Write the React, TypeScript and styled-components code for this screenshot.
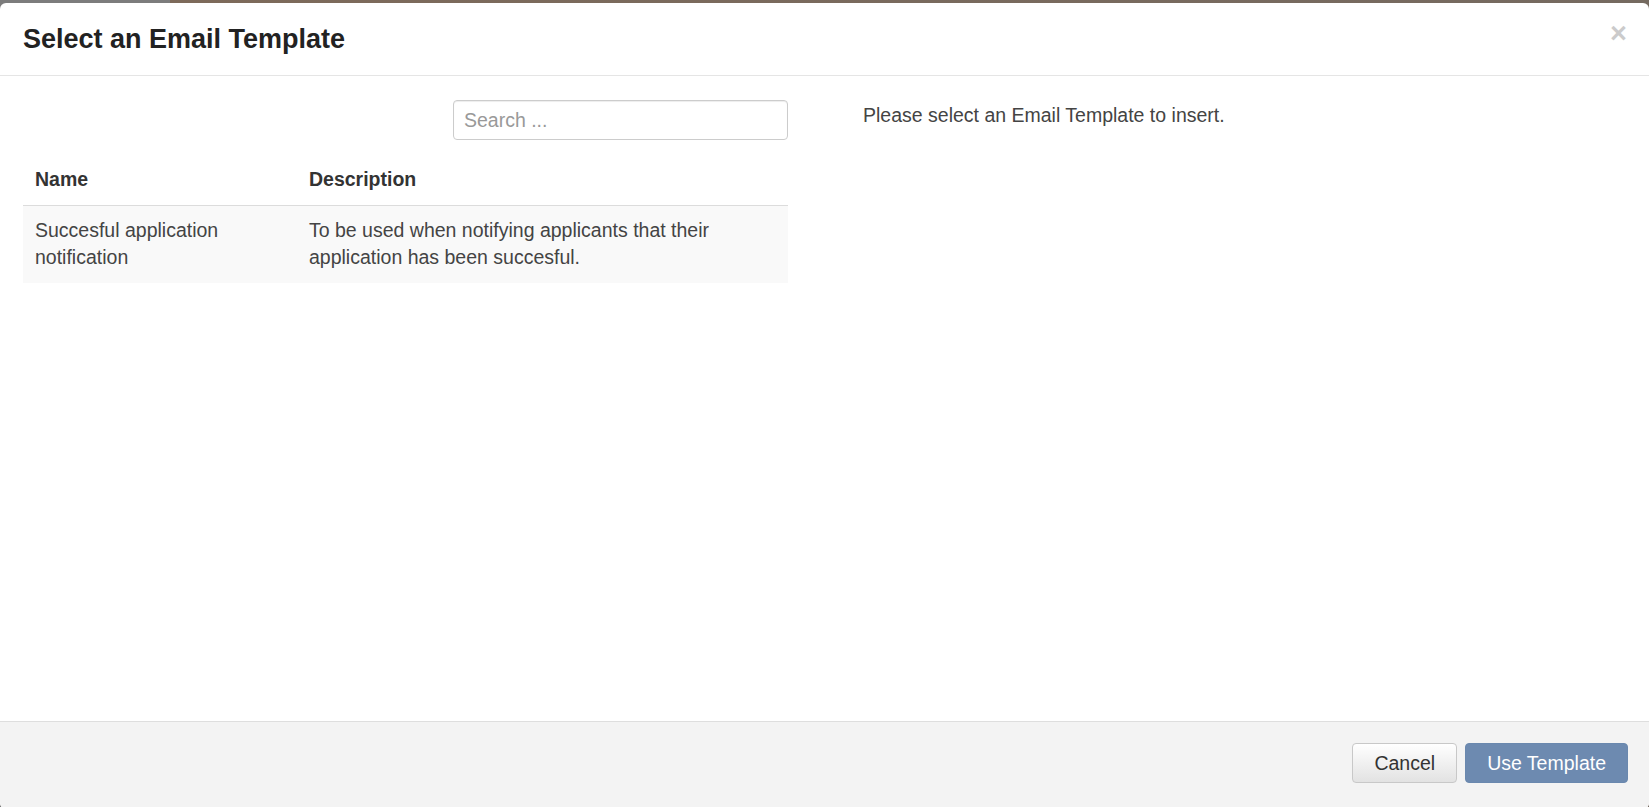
import React, { useState } from 'react';
import styled, { createGlobalStyle } from 'styled-components';

const TEMPLATES = [
  {
    id: 1,
    name: 'Succesful application notification',
    description: 'To be used when notifying applicants that their application has been succesful.',
  },
];

const GlobalStyle = createGlobalStyle`
  html, body {
    margin: 0;
    padding: 0;
    height: 807px;
    overflow: hidden;
    background: linear-gradient(90deg, #7c7c7c 0, #7c7c7c 170px, #7d6a5a 170px, #756a60 100%);
    font-family: 'Liberation Sans', Arial, sans-serif;
  }
  * {
    box-sizing: border-box;
  }
`;

const App = () => {
  const [query, setQuery] = useState('');
  const rows = TEMPLATES.filter((t) => t.name.toLowerCase().includes(query.toLowerCase()));

  return (
    <Page>
      <GlobalStyle />
      <Modal>
        <Header>
          <Title>Select an Email Template</Title>
          <CloseButton aria-label="Close">×</CloseButton>
        </Header>
        <Body>
          <LeftCol>
            <SearchRow>
              <SearchInput
                placeholder="Search ..."
                value={query}
                onChange={(e) => setQuery(e.target.value)}
              />
            </SearchRow>
            <Table>
              <thead>
                <tr>
                  <Th width="274px">Name</Th>
                  <Th>Description</Th>
                </tr>
              </thead>
              <tbody>
                {rows.map((row, idx) => (
                  <Row key={row.id} striped={idx % 2 === 0}>
                    <Td>{row.name}</Td>
                    <Td>{row.description}</Td>
                  </Row>
                ))}
              </tbody>
            </Table>
          </LeftCol>
          <RightCol>
            <Hint>Please select an Email Template to insert.</Hint>
          </RightCol>
        </Body>
        <Footer>
          <Button>Cancel</Button>
          <Button primary>Use Template</Button>
        </Footer>
      </Modal>
    </Page>
  );
};

const Page = styled.div`
  height: 807px;
  padding-top: 3px;
`;

const Modal = styled.div`
  height: 806px;
  background: #fff;
  border-radius: 6px;
  display: flex;
  flex-direction: column;
  overflow: hidden;
`;

const Header = styled.div`
  height: 73px;
  flex-shrink: 0;
  padding: 1px 22px 0 23px;
  border-bottom: 1px solid #e5e5e5;
  display: flex;
  align-items: center;
  justify-content: space-between;
`;

const Title = styled.h4`
  margin: 0;
  font-size: 27px;
  font-weight: 700;
  color: #222;
  line-height: 1.1;
`;

const CloseButton = styled.button`
  margin-bottom: 12px;
  padding: 0;
  border: 0;
  background: transparent;
  font-family: 'Liberation Sans', Arial, sans-serif;
  font-size: 29px;
  font-weight: 700;
  line-height: 1;
  color: #000;
  opacity: 0.2;
  cursor: pointer;
`;

const Body = styled.div`
  flex: 1;
  padding: 24px 23px 0;
  display: grid;
  grid-template-columns: 765px 1fr;
  column-gap: 75px;
  align-items: start;
`;

const LeftCol = styled.div`
  display: flex;
  flex-direction: column;
`;

const SearchRow = styled.div`
  display: flex;
  justify-content: flex-end;
`;

const SearchInput = styled.input`
  width: 335px;
  height: 40px;
  padding: 0 10px;
  border: 1px solid #ccc;
  border-radius: 4px;
  font-family: 'Liberation Sans', Arial, sans-serif;
  font-size: 19.5px;
  color: #555;
  box-shadow: inset 0 1px 1px rgba(0, 0, 0, 0.075);
  outline: none;
  &::placeholder {
    color: #999;
  }
`;

const Table = styled.table`
  width: 100%;
  margin-top: 15px;
  border-collapse: collapse;
  table-layout: fixed;
  font-size: 19.5px;
  line-height: 27.5px;
  color: #444;
`;

const Th = styled.th<{ width?: string }>`
  width: ${(p) => p.width || 'auto'};
  padding: 11px 12px;
  text-align: left;
  font-weight: 700;
  color: #333;
  border-bottom: 1px solid #dcdcdc;
`;

const Row = styled.tr<{ striped?: boolean }>`
  background: ${(p) => (p.striped ? '#f9f9f9' : '#fff')};
`;

const Td = styled.td`
  padding: 11px 12px;
  vertical-align: top;
`;

const RightCol = styled.div`
  padding-top: 2px;
`;

const Hint = styled.p`
  margin: 0;
  font-size: 19.5px;
  line-height: 27.5px;
  color: #444;
`;

const Footer = styled.div`
  height: 88px;
  flex-shrink: 0;
  padding: 21px 21px 0;
  background: #f3f3f3;
  border-top: 1px solid #dedede;
  display: flex;
  justify-content: flex-end;
  align-items: flex-start;
  gap: 8px;
`;

const Button = styled.button<{ primary?: boolean }>`
  height: 40px;
  padding: 0 21px;
  border-radius: 4px;
  border: 1px solid ${(p) => (p.primary ? '#6a88ae' : '#c8c8c8')};
  background: ${(p) => (p.primary ? '#6d8ab0' : 'linear-gradient(#ffffff, #e2e2e2)')};
  color: ${(p) => (p.primary ? '#fff' : '#333')};
  font-family: 'Liberation Sans', Arial, sans-serif;
  font-size: 19.5px;
  cursor: pointer;
`;

export default App;
